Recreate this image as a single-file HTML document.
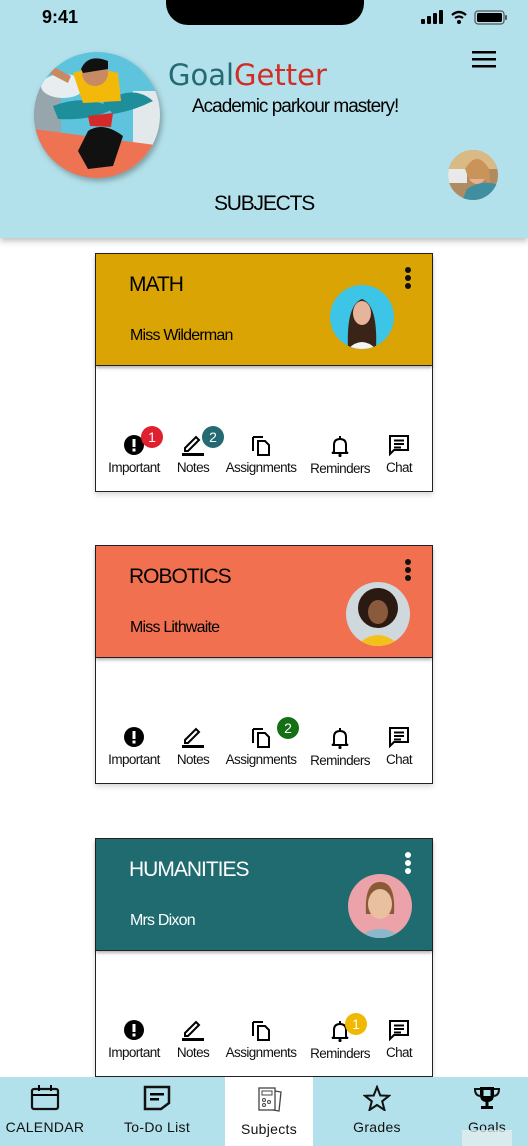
<!DOCTYPE html>
<html><head><meta charset="utf-8">
<style>
*{margin:0;padding:0;box-sizing:border-box}
body{width:528px;height:1146px;overflow:hidden;background:#fff;font-family:"Liberation Sans",sans-serif;position:relative}
.abs{position:absolute}
.hdr{left:0;top:0;width:528px;height:238px;background:#b3e1eb;box-shadow:0 3px 6px rgba(0,0,0,.25)}
.card{position:absolute;left:95px;width:338px;height:239px;border:1.5px solid #222;background:#fff;box-shadow:0 3px 5px rgba(0,0,0,.15)}
.ch{position:absolute;left:0;top:0;width:100%;height:112px;border-bottom:1.5px solid #222;box-shadow:0 2px 3px rgba(0,0,0,.3)}
.title{position:absolute;left:33px;top:19px;font-size:21px;letter-spacing:-1px}
.teach{position:absolute;left:34px;top:73px;font-size:16px;letter-spacing:-.8px}
.dots{position:absolute;left:309px;top:13px;width:6px}
.dots i{display:block;width:6px;height:6px;border-radius:3px;margin-bottom:2px}
.av{position:absolute;width:64px;height:64px;border-radius:50%;overflow:hidden}
.it{position:absolute;top:180px;text-align:center;font-size:13.5px;letter-spacing:-.6px;color:#111}
.it svg{display:block;margin:0 auto 4px}
.badge{position:absolute;width:22px;height:22px;border-radius:11px;color:#fff;font-size:14px;text-align:center;line-height:22px}
.nav{left:0;top:1077px;width:528px;height:69px;background:#b3e1eb}
.nt{position:absolute;top:1077px;height:69px;text-align:center;font-size:14px;letter-spacing:.3px;color:#111}
.nt svg{display:block;margin:8px auto 8px}
</style></head><body>
<div class="abs hdr"></div>
<div class="abs" style="left:166px;top:-10px;width:198px;height:35px;background:#000;border-radius:0 0 22px 22px"></div>
<div class="abs" style="left:42px;top:7px;font-size:18px;font-weight:bold">9:41</div>
<svg class="abs" style="left:421px;top:10px" width="90" height="16">
<rect x="0" y="9" width="4" height="5" rx="1"/><rect x="6" y="6" width="4" height="8" rx="1"/><rect x="12" y="3" width="4" height="11" rx="1"/><rect x="18" y="0" width="4" height="14" rx="1"/>
<path d="M31 5 Q38 -1 45 5 M34 8 Q38 5 42 8" stroke="#000" stroke-width="2.3" fill="none"/><circle cx="38" cy="12" r="2"/>
<rect x="54" y="1" width="29" height="13" rx="3" fill="none" stroke="#555" stroke-width="1.2"/><rect x="56" y="3" width="25" height="9" rx="1.5"/><rect x="84" y="5" width="2" height="5" rx="1" fill="#555"/>
</svg>
<svg class="abs" style="left:33px;top:51px;filter:drop-shadow(2px 3px 3px rgba(0,0,0,.3))" width="130" height="130" viewBox="0 0 130 130">
<defs><clipPath id="c"><circle cx="64" cy="64" r="63"/></clipPath></defs>
<g clip-path="url(#c)">
<rect width="130" height="130" fill="#5ec4de"/>
<rect x="0" y="30" width="28" height="100" fill="#97a6ad"/><rect x="100" y="40" width="30" height="90" fill="#e3e8ea"/>
<ellipse cx="30" cy="35" rx="22" ry="12" fill="#e8eef0"/>
<path d="M0 78 L130 95 L130 130 L0 130Z" fill="#ee7353"/>
<path d="M55 80 Q70 70 90 85 L80 115 L55 118 L45 100Z" fill="#111"/>
<path d="M20 55 Q55 42 80 58 Q58 70 25 68Z" fill="#1d8e9a"/><path d="M70 52 Q100 32 120 50 Q100 60 80 63Z" fill="#1d8e9a"/>
<path d="M55 65 L80 62 L78 76 L57 75Z" fill="#d42a2a"/>
<path d="M40 22 Q60 15 85 22 L88 50 L50 52Z" fill="#f2b80a"/>
<circle cx="62" cy="22" r="13" fill="#c88a63"/><path d="M48 18 Q55 2 75 10 L75 18 L50 22Z" fill="#111"/>
<path d="M10 10 L38 25 L35 32 L8 18Z" fill="#c88a63"/>
</g></svg>
<div class="abs" style="left:168px;top:58px;font-family:'Comic Sans MS','DejaVu Sans',sans-serif;font-size:29px;letter-spacing:0px"><span style="color:#236a72">Goal</span><span style="color:#d42c24">Getter</span></div>
<div class="abs" style="left:192px;top:96px;font-size:19px;letter-spacing:-1px">Academic parkour mastery!</div>
<svg class="abs" style="left:472px;top:51px" width="24" height="18"><rect y="0" width="24" height="2.5"/><rect y="7" width="24" height="2.5"/><rect y="14" width="24" height="2.5"/></svg>
<svg class="abs" style="left:447px;top:149px" width="52" height="52"><defs><clipPath id="a0"><circle cx="26" cy="26" r="25"/></clipPath></defs><g clip-path="url(#a0)"><rect width="52" height="52" fill="#b08a60"/><rect width="52" height="20" fill="#d9ba85"/><rect y="20" width="20" height="14" fill="#e8eaea"/><ellipse cx="30" cy="22" rx="10" ry="13" fill="#e8b090"/><path d="M18 20 Q30 0 42 20 L44 40 L38 30 L22 30Z" fill="#c9935a"/><path d="M20 40 Q35 30 52 36 L52 52 L15 52Z" fill="#3f8fa0"/></g></svg>
<div class="abs" style="left:0;width:528px;text-align:center;top:192px;font-size:21px;letter-spacing:-1.2px">SUBJECTS</div>

<div class="card" style="top:253px">
 <div class="ch" style="background:#d9a404"></div>
 <div class="title">MATH</div><div class="teach">Miss Wilderman</div>
 <div class="dots"><i style="background:#111"></i><i style="background:#111"></i><i style="background:#111"></i></div>
 <svg class="av" style="left:234px;top:31px" width="64" height="64"><rect width="64" height="64" fill="#3cc5e6"/><path d="M18 64 Q16 20 32 14 Q48 20 46 64Z" fill="#3a2418"/><ellipse cx="32" cy="28" rx="9" ry="12" fill="#e6b49a"/><path d="M18 64 Q32 50 46 64Z" fill="#f4f4f4"/></svg>
 <div class="it" style="left:8px;width:60px"><svg width="22" height="22"><circle cx="11" cy="11" r="10"/><rect x="9.5" y="5" width="3" height="8" fill="#fff"/><rect x="9.5" y="14.5" width="3" height="3" fill="#fff"/></svg>Important</div>
 <div class="it" style="left:73px;width:48px"><svg width="24" height="22"><path d="M4 14 L15 3 L18 6 L7 17 L4 17Z" fill="none" stroke="#000" stroke-width="2"/><rect x="1" y="19" width="22" height="3"/></svg>Notes</div>
 <div class="it" style="left:128px;width:74px"><svg width="22" height="22"><path d="M3 3 L3 17 M3 3 L13 3" stroke="#000" stroke-width="2" fill="none"/><path d="M8 7 L15 7 L19 11 L19 21 L8 21Z" fill="none" stroke="#000" stroke-width="2"/></svg>Assignments</div>
 <div class="it" style="left:213px;width:62px;top:181px"><svg width="22" height="22"><path d="M5 17 L5 10 Q5 4 11 4 Q17 4 17 10 L17 17 L19 18 L3 18Z" fill="none" stroke="#000" stroke-width="2"/><circle cx="11" cy="20.5" r="1.6"/><rect x="10" y="1" width="2" height="3"/></svg>Reminders</div>
 <div class="it" style="left:285px;width:36px"><svg width="22" height="22"><path d="M2 2 L20 2 L20 16 L6 16 L2 20Z" fill="none" stroke="#000" stroke-width="2"/><rect x="6" y="5.5" width="10" height="2"/><rect x="6" y="9" width="10" height="2"/><rect x="6" y="12.5" width="7" height="2"/></svg>Chat</div>
 <div class="badge" style="left:45px;top:172px;background:#e0202e">1</div>
 <div class="badge" style="left:106px;top:172px;background:#236a72">2</div>
</div>

<div class="card" style="top:545px">
 <div class="ch" style="background:#f07050"></div>
 <div class="title">ROBOTICS</div><div class="teach">Miss Lithwaite</div>
 <div class="dots"><i style="background:#111"></i><i style="background:#111"></i><i style="background:#111"></i></div>
 <svg class="av" style="left:250px;top:36px" width="64" height="64"><rect width="64" height="64" fill="#cfd8dc"/><circle cx="32" cy="26" r="20" fill="#2a1a12"/><ellipse cx="32" cy="30" rx="10" ry="12" fill="#8a5a3c"/><path d="M10 64 Q32 42 54 64Z" fill="#f3c21a"/></svg>
 <div class="it" style="left:8px;width:60px"><svg width="22" height="22"><circle cx="11" cy="11" r="10"/><rect x="9.5" y="5" width="3" height="8" fill="#fff"/><rect x="9.5" y="14.5" width="3" height="3" fill="#fff"/></svg>Important</div>
 <div class="it" style="left:73px;width:48px"><svg width="24" height="22"><path d="M4 14 L15 3 L18 6 L7 17 L4 17Z" fill="none" stroke="#000" stroke-width="2"/><rect x="1" y="19" width="22" height="3"/></svg>Notes</div>
 <div class="it" style="left:128px;width:74px"><svg width="22" height="22"><path d="M3 3 L3 17 M3 3 L13 3" stroke="#000" stroke-width="2" fill="none"/><path d="M8 7 L15 7 L19 11 L19 21 L8 21Z" fill="none" stroke="#000" stroke-width="2"/></svg>Assignments</div>
 <div class="it" style="left:213px;width:62px;top:181px"><svg width="22" height="22"><path d="M5 17 L5 10 Q5 4 11 4 Q17 4 17 10 L17 17 L19 18 L3 18Z" fill="none" stroke="#000" stroke-width="2"/><circle cx="11" cy="20.5" r="1.6"/><rect x="10" y="1" width="2" height="3"/></svg>Reminders</div>
 <div class="it" style="left:285px;width:36px"><svg width="22" height="22"><path d="M2 2 L20 2 L20 16 L6 16 L2 20Z" fill="none" stroke="#000" stroke-width="2"/><rect x="6" y="5.5" width="10" height="2"/><rect x="6" y="9" width="10" height="2"/><rect x="6" y="12.5" width="7" height="2"/></svg>Chat</div>
 <div class="badge" style="left:181px;top:171px;background:#157015">2</div>
</div>

<div class="card" style="top:838px">
 <div class="ch" style="background:#1f6b70"></div>
 <div class="title" style="color:#fff">HUMANITIES</div><div class="teach" style="color:#fff">Mrs Dixon</div>
 <div class="dots"><i style="background:#fff"></i><i style="background:#fff"></i><i style="background:#fff"></i></div>
 <svg class="av" style="left:252px;top:35px" width="64" height="64"><rect width="64" height="64" fill="#eba2a8"/><path d="M18 40 Q16 8 32 8 Q48 8 46 40Z" fill="#8a5a35"/><ellipse cx="32" cy="30" rx="12" ry="15" fill="#e9c0a0"/><path d="M10 64 Q32 46 54 64Z" fill="#8ab8cc"/></svg>
 <div class="it" style="left:8px;width:60px"><svg width="22" height="22"><circle cx="11" cy="11" r="10"/><rect x="9.5" y="5" width="3" height="8" fill="#fff"/><rect x="9.5" y="14.5" width="3" height="3" fill="#fff"/></svg>Important</div>
 <div class="it" style="left:73px;width:48px"><svg width="24" height="22"><path d="M4 14 L15 3 L18 6 L7 17 L4 17Z" fill="none" stroke="#000" stroke-width="2"/><rect x="1" y="19" width="22" height="3"/></svg>Notes</div>
 <div class="it" style="left:128px;width:74px"><svg width="22" height="22"><path d="M3 3 L3 17 M3 3 L13 3" stroke="#000" stroke-width="2" fill="none"/><path d="M8 7 L15 7 L19 11 L19 21 L8 21Z" fill="none" stroke="#000" stroke-width="2"/></svg>Assignments</div>
 <div class="it" style="left:213px;width:62px;top:181px"><svg width="22" height="22"><path d="M5 17 L5 10 Q5 4 11 4 Q17 4 17 10 L17 17 L19 18 L3 18Z" fill="none" stroke="#000" stroke-width="2"/><circle cx="11" cy="20.5" r="1.6"/><rect x="10" y="1" width="2" height="3"/></svg>Reminders</div>
 <div class="it" style="left:285px;width:36px"><svg width="22" height="22"><path d="M2 2 L20 2 L20 16 L6 16 L2 20Z" fill="none" stroke="#000" stroke-width="2"/><rect x="6" y="5.5" width="10" height="2"/><rect x="6" y="9" width="10" height="2"/><rect x="6" y="12.5" width="7" height="2"/></svg>Chat</div>
 <div class="badge" style="left:249px;top:174px;background:#f0b800">1</div>
</div>

<div class="abs nav"></div>
<div class="abs" style="left:225px;top:1077px;width:88px;height:69px;background:#fff"></div>
<div class="nt" style="left:0;width:90px"><svg width="30" height="26"><rect x="2" y="4" width="26" height="20" rx="2" fill="none" stroke="#111" stroke-width="2.2"/><rect x="2" y="9" width="26" height="2"/><rect x="8" y="0" width="2" height="6"/><rect x="20" y="0" width="2" height="6"/></svg>CALENDAR</div>
<div class="nt" style="left:112px;width:90px"><svg width="28" height="26"><path d="M2 2 L26 2 L26 18 L18 24 L2 24Z" fill="none" stroke="#111" stroke-width="2.5"/><rect x="7" y="8" width="14" height="2.5"/><rect x="7" y="13" width="9" height="2.5"/></svg>To-Do List</div>
<div class="nt" style="left:225px;width:88px"><svg width="28" height="28"><rect x="4" y="3" width="16" height="22" fill="none" stroke="#444" stroke-width="1.3"/><path d="M20 6 L26 7 L24 26 L18 25" fill="none" stroke="#444" stroke-width="1.3"/><rect x="7" y="6" width="10" height="4" fill="none" stroke="#444"/><circle cx="9" cy="15" r="1.5" fill="none" stroke="#444"/><circle cx="14" cy="17" r="1.5" fill="none" stroke="#444"/><circle cx="9" cy="20" r="1.5" fill="none" stroke="#444"/></svg>Subjects</div>
<div class="nt" style="left:332px;width:90px"><svg width="28" height="26"><path d="M14 2 L17.3 10.5 L26 10.8 L19.2 16.3 L21.5 25 L14 20 L6.5 25 L8.8 16.3 L2 10.8 L10.7 10.5Z" fill="none" stroke="#111" stroke-width="2"/></svg>Grades</div>
<div class="nt" style="left:442px;width:90px"><svg width="28" height="26"><path d="M7 2 L21 2 L21 10 Q21 17 14 17 Q7 17 7 10Z"/><path d="M7 4 L2 4 Q2 11 8 11 M21 4 L26 4 Q26 11 20 11" fill="none" stroke="#111" stroke-width="2"/><rect x="12.5" y="16" width="3" height="6"/><rect x="8" y="21" width="12" height="3"/><rect x="10.5" y="5" width="7" height="6" fill="#b3e1eb"/></svg>Goals</div>
<div class="abs" style="left:462px;top:1130px;width:50px;height:16px;background:rgba(235,240,240,.7)"></div>
</body></html>
